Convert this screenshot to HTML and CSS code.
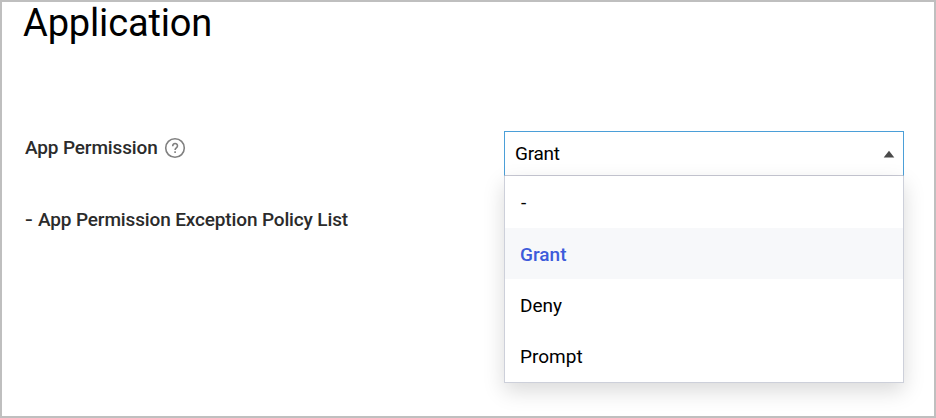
FILE: index.html
```html
<!DOCTYPE html>
<html lang="en">
<head>
<meta charset="utf-8">
<title>Application</title>
<link rel="stylesheet" href="styles.css">
</head>
<body>
<main class="panel">
  <h1 class="title">Application</h1>
  <div class="content">
    <section class="labels">
      <div class="label"><span>App Permission</span>
        <svg class="help" viewBox="0 0 22 22" width="22" height="22"><circle cx="11" cy="11" r="9.3"/><path d="M8.700 9.200c0-3.500 4.800-3.500 4.800-.3 0 1.900-2.400 2-2.400 4M11.100 14.300v1.700"/></svg>
      </div>
      <div class="label"><span class="dash">-</span><span>App Permission Exception Policy List</span></div>
    </section>
    <section class="select">
      <div class="field"><span>Grant</span><svg class="arrow" viewBox="0 0 12 8" width="12" height="8"><path d="M.7 7.500L6 .8l5.300 6.700z"/></svg></div>
      <ul class="menu">
        <li class="option">-</li>
        <li class="option selected">Grant</li>
        <li class="option">Deny</li>
        <li class="option">Prompt</li>
      </ul>
    </section>
  </div>
</main>
</body>
</html>
```
FILE: styles.css
```css
* { box-sizing: border-box; }
body { margin: 0; font-family: Roboto, sans-serif; color: #000; background: #fff; }
.panel { height: 418px; border: 2px solid #bfbfbf; overflow: hidden; }
.title { margin: 0 0 0 21px; height: 129px; font-size: 38px; font-weight: 400; line-height: 42px; letter-spacing: -0.15px; }
.content { display: grid; grid-template-columns: 479px 400px; padding-left: 23px; }
.labels { padding-top: 1px; color: #2b2b2b; font-size: 19px; font-weight: 500; letter-spacing: -0.14px; }
.label { display: flex; align-items: center; height: 30px; margin-bottom: 42px; white-space: nowrap; }
.dash { width: 13px; transform: scaleX(1.2); transform-origin: left; }
.help { margin: 2px 0 0 6px; fill: none; stroke: #808080; stroke-width: 1.6; }
.select { font-size: 19px; }
.field { display: flex; align-items: center; justify-content: space-between; height: 45px; padding: 0 8px 0 10px; border: 1px solid #4b9fd8; border-bottom-color: #c8c9d4; letter-spacing: -0.3px; }
.arrow { fill: #4a4a4a; }
.menu { list-style: none; margin: 0; padding: 0; height: 207px; border: 1px solid #cdd0da; border-top: 0; box-shadow: 0 8px 20px rgba(0,0,0,.15); }
.option { height: 51px; padding-left: 15px; line-height: 53px; }
.option:first-child { height: 52px; padding-left: 16px; }
.selected { background: #f7f8fa; color: #3d5bdb; font-weight: 500; }
```
